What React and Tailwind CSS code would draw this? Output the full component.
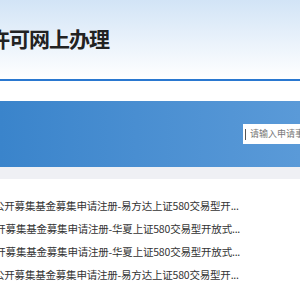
export default function App() {
  const items = [
    { text: '公开募集基金募集申请注册-易方达上证580交易型开...', ml: 'ml-[-6px]' },
    { text: '公开募集基金募集申请注册-华夏上证580交易型开放式...', ml: 'ml-[-15px]' },
    { text: '公开募集基金募集申请注册-华夏上证580交易型开放式...', ml: 'ml-[-15px]' },
    { text: '公开募集基金募集申请注册-易方达上证580交易型开...', ml: 'ml-[-6px]' },
  ];

  return (
    <div className="w-[300px] h-[300px] overflow-hidden bg-white font-['Noto_Sans_CJK_SC','Noto_Sans',sans-serif]">
      {/* Header */}
      <header className="h-[79px] bg-gradient-to-b from-[#d2e4f6] to-[#ffffff] flex items-center">
        <h1 className="ml-[-11px] whitespace-nowrap text-[21px] font-bold text-[#222] tracking-[-1px] mt-[-2px]">
          许可网上办理
        </h1>
      </header>
      <div className="h-[2px] bg-[#2a78d0]" />

      <div className="h-[20px]" />

      {/* Search banner */}
      <section className="h-[66px] bg-gradient-to-r from-[#3a84cb] to-[#5a9ad8] flex items-center justify-end">
        <div className="w-[57px] h-[20px] bg-white flex items-center overflow-hidden pl-[2px]">
          <span className="w-px h-[11px] bg-[#555] shrink-0" />
          <span className="ml-[4px] whitespace-nowrap text-[9px] text-[#777]">请输入申请事项</span>
        </div>
      </section>
      <div className="h-[12px] bg-[#eff0f4]" />

      {/* List */}
      <ul className="pt-[15px] flex flex-col">
        {items.map((it, i) => (
          <li key={i} className="h-[23px] flex items-center overflow-hidden">
            <span className={`${it.ml} whitespace-nowrap text-[10.5px] tracking-[-0.2px] text-[#333]`}>
              {it.text}
            </span>
          </li>
        ))}
      </ul>
    </div>
  );
}
